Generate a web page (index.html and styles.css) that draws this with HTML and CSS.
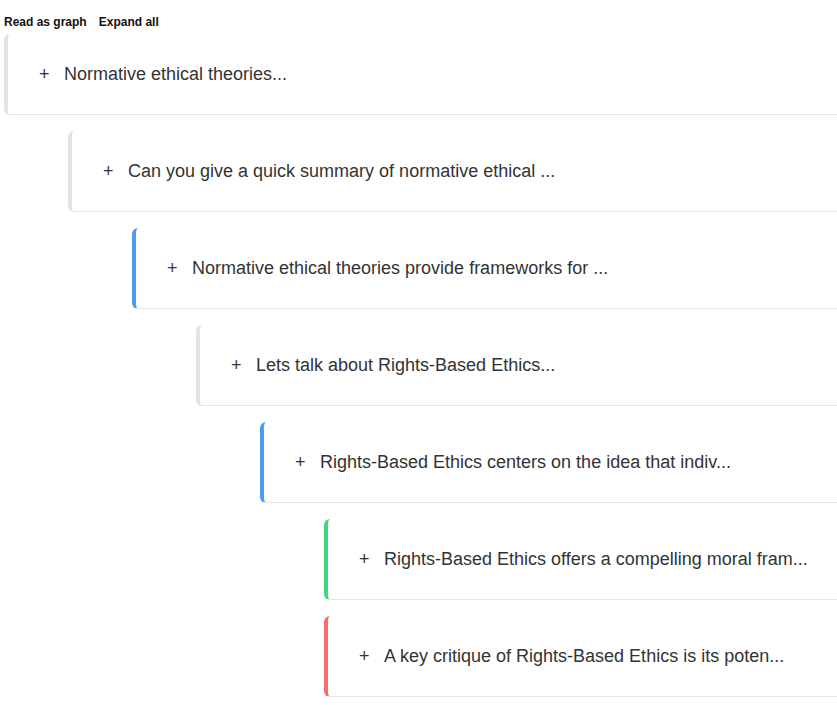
FILE: index.html
```html
<!DOCTYPE html>
<html>
<head>
<meta charset="utf-8">
<link rel="stylesheet" href="styles.css">
</head>
<body>
<div class="toolbar">
  <button class="tool">Read as graph</button>
  <button class="tool">Expand all</button>
</div>
<div class="tree">
  <div class="card d0 neutral"><span class="plus">+</span><span class="label">Normative ethical theories...</span></div>
  <div class="card d1 neutral"><span class="plus">+</span><span class="label">Can you give a quick summary of normative ethical ...</span></div>
  <div class="card d2 blue"><span class="plus">+</span><span class="label">Normative ethical theories provide frameworks for ...</span></div>
  <div class="card d3 neutral"><span class="plus">+</span><span class="label">Lets talk about Rights-Based Ethics...</span></div>
  <div class="card d4 blue"><span class="plus">+</span><span class="label">Rights-Based Ethics centers on the idea that indiv...</span></div>
  <div class="card d5 green"><span class="plus">+</span><span class="label">Rights-Based Ethics offers a compelling moral fram...</span></div>
  <div class="card d5 red"><span class="plus">+</span><span class="label">A key critique of Rights-Based Ethics is its poten...</span></div>
</div>
</body>
</html>
```

FILE: styles.css
```css
html, body {
  margin: 0;
  padding: 0;
  background: #ffffff;
  overflow: hidden;
}

body {
  font-family: "Liberation Sans", Arial, Helvetica, sans-serif;
  color: #333333;
  padding-left: 4px;
}

.toolbar {
  display: flex;
  gap: 12px;
  padding-top: 15px;
  height: 19px;
}

.tool {
  border: none;
  background: none;
  padding: 0;
  font-family: "Liberation Sans", Arial, sans-serif;
  font-weight: bold;
  font-size: 12px;
  line-height: 14px;
  color: #111111;
  height: 14px;
}

.tree {
  display: flex;
  flex-direction: column;
  gap: 16px;
}

.card {
  box-sizing: border-box;
  height: 81px;
  display: flex;
  align-items: center;
  padding-left: 31px;
  padding-top: 1px;
  border-left: 4px solid #e3e3e5;
  border-bottom: 1px solid #e6e6e6;
  border-radius: 6px 0 0 6px;
  background: #ffffff;
  font-size: 18px;
  color: #333333;
  white-space: nowrap;
  overflow: hidden;
}

.plus {
  width: 25px;
  flex: none;
  color: #333333;
}

.d0 { margin-left: 0; }
.d1 { margin-left: 64px; }
.d2 { margin-left: 128px; }
.d3 { margin-left: 192px; }
.d4 { margin-left: 256px; }
.d5 { margin-left: 320px; }

.neutral { border-left-color: #e3e3e5; }
.blue { border-left-color: #4a9ef0; }
.green { border-left-color: #3fd585; }
.red { border-left-color: #f56f6f; }
```
